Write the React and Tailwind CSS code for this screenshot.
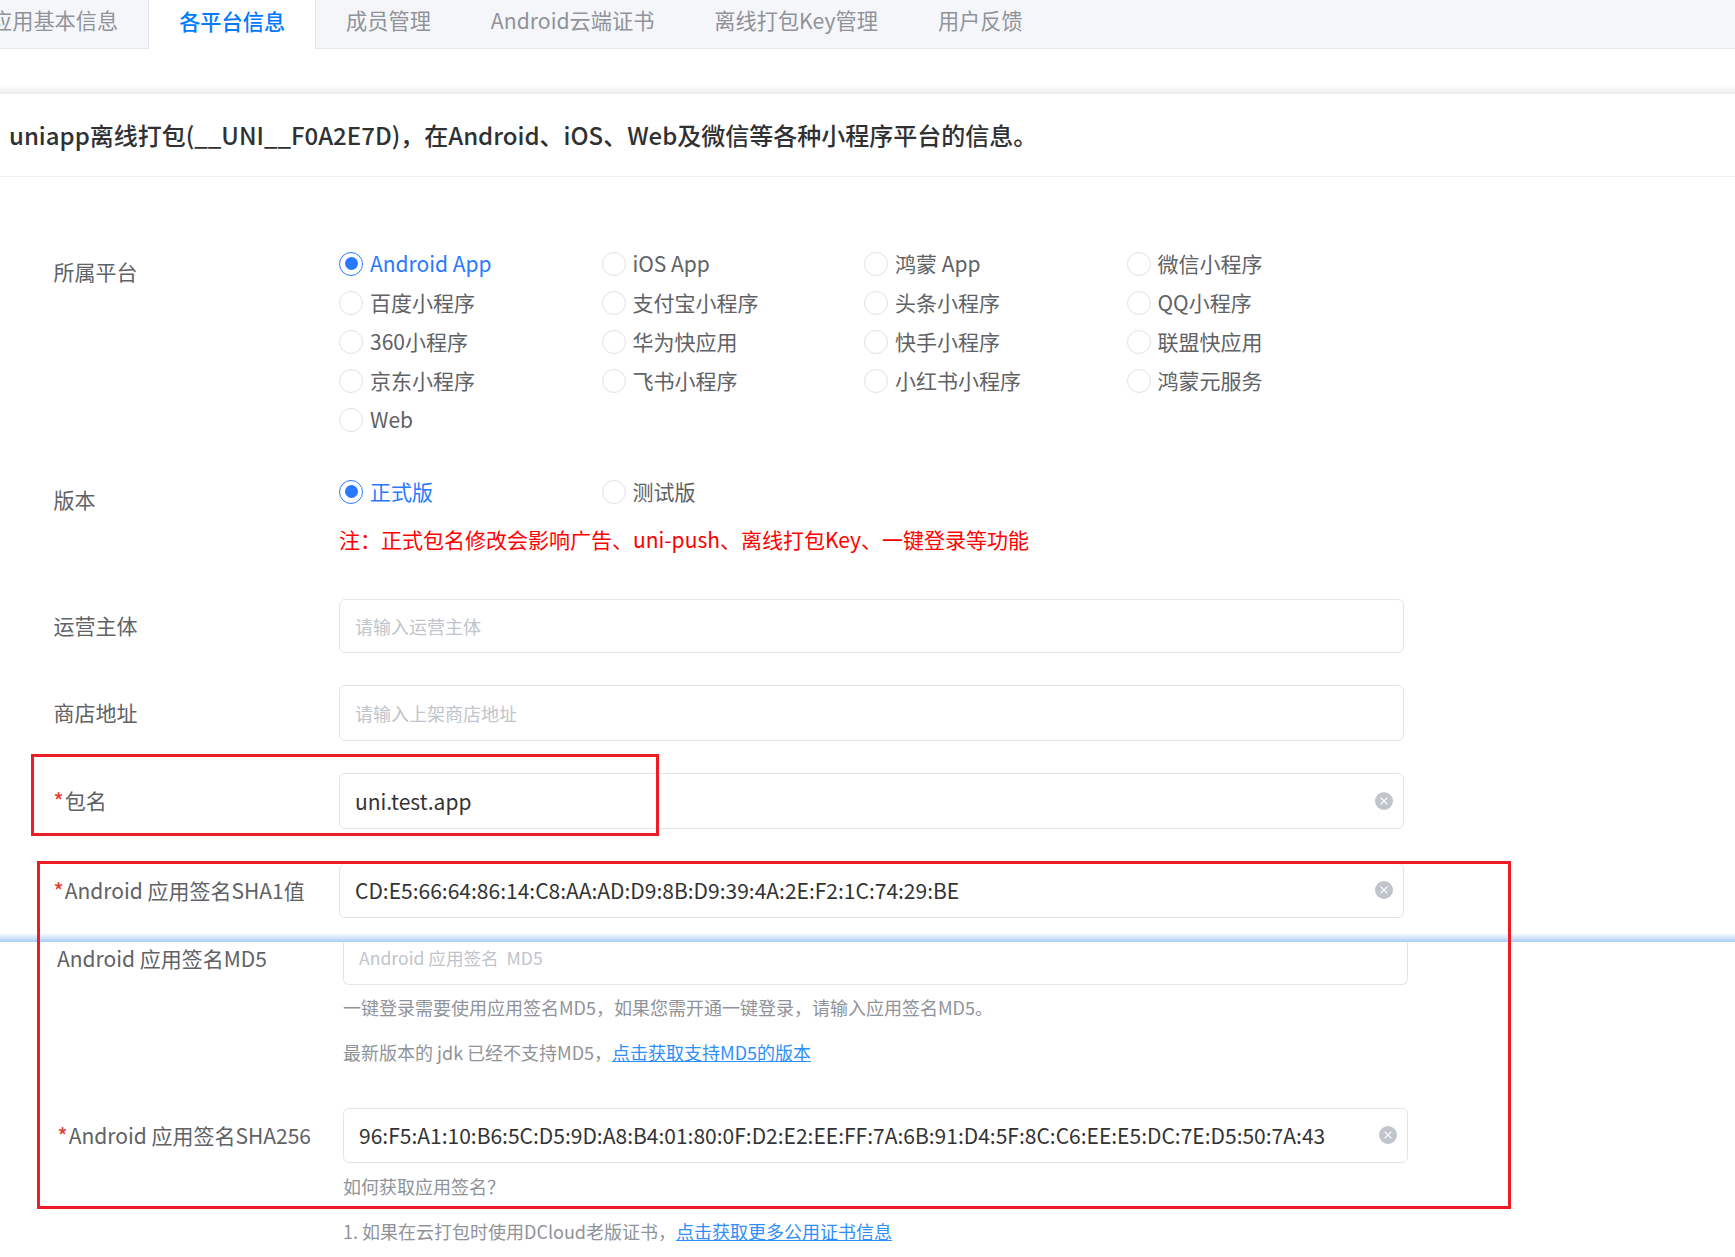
import React from 'react';

const font = { fontFamily: '"Noto Sans CJK SC", "Noto Sans", sans-serif' };

const tabs = ['应用基本信息', '各平台信息', '成员管理', 'Android云端证书', '离线打包Key管理', '用户反馈'];

const platforms = [
  'Android App', 'iOS App', '鸿蒙 App', '微信小程序',
  '百度小程序', '支付宝小程序', '头条小程序', 'QQ小程序',
  '360小程序', '华为快应用', '快手小程序', '联盟快应用',
  '京东小程序', '飞书小程序', '小红书小程序', '鸿蒙元服务',
  'Web',
];

function Radio({ label, checked }) {
  return (
    <div className="flex items-center h-[39px]">
      <span
        className={
          checked
            ? 'flex items-center justify-center w-[24px] h-[24px] rounded-full border border-[#2979ff]'
            : 'flex items-center justify-center w-[24px] h-[24px] rounded-full border border-[#dfe2ea]'
        }
      >
        {checked && <span className="w-[13px] h-[13px] rounded-full bg-[#2979ff]" />}
      </span>
      <span className={checked ? 'ml-[7px] text-[21px] text-[#2979ff]' : 'ml-[7px] text-[21px] text-[#606266]'}>{label}</span>
    </div>
  );
}

function ClearIcon() {
  return (
    <svg width="18" height="18" viewBox="0 0 18 18" className="shrink-0 mb-[1px]">
      <circle cx="9" cy="9" r="9" fill="#c0c4cc" />
      <path d="M5.6 5.6l6.8 6.8M12.4 5.6l-6.8 6.8" stroke="#fff" strokeWidth="1.3" />
    </svg>
  );
}

function Field({ label, required, value, placeholder, className }) {
  return (
    <div className={'flex items-center ' + className}>
      <div className="w-[286px] shrink-0 pl-[0.5px] text-[21px] text-[#606266] whitespace-nowrap">
        {required && <span className="mr-[1px] font-medium text-[#e43d33]">*</span>}
        {label}
      </div>
      <div className="flex items-center flex-1 h-full pl-[15px] pr-[10px] border border-[#e5e5e5] rounded-[6px]">
        {value ? (
          <span className="flex-1 pt-[1px] text-[21px] text-[#333]">{value}</span>
        ) : (
          <span className="flex-1 text-[18px] text-[#c0c4cc]">{placeholder}</span>
        )}
        {value && <ClearIcon />}
      </div>
    </div>
  );
}

export default function App() {
  return (
    <div className="relative w-[1735px] h-[1257px] overflow-hidden bg-white" style={font}>
      {/* tabs */}
      <div className="flex h-[49px] bg-[#f5f6fa] border-b border-[#e4e6ee]">
        <div className="-ml-[39px] flex">
          {tabs.map((t, i) => (
            <div
              key={t}
              className={
                i === 1
                  ? 'h-[49px] px-[30px] pb-[8px] flex items-center text-[21.2px] text-[#007aff] bg-white border-x border-[#e0e2ea] font-medium'
                  : 'h-[48px] px-[30px] pb-[8px] flex items-center text-[21.2px] text-[#909399]'
              }
            >
              {t}
            </div>
          ))}
        </div>
      </div>

      {/* title */}
      <div className="mt-[36px] h-[9px] bg-linear-to-b from-white to-[#ececec]" />
      <div className="h-[83px] flex items-center pl-[9px] border-b border-[#f0f0f0] text-[24px] font-medium text-[#303133]">
        uniapp离线打包(__UNI__F0A2E7D)，在Android、iOS、Web及微信等各种小程序平台的信息。
      </div>

      {/* first part of the form */}
      <div className="pl-[53px] w-[1404px]">
        <div className="flex mt-[67px]">
          <div className="w-[286px] shrink-0 pt-[12px] pl-[0.5px] text-[21px] text-[#606266]">所属平台</div>
          <div className="grid grid-cols-[262.5px_262.5px_262.5px_262.5px]">
            {platforms.map((p, i) => (
              <Radio key={p} label={p} checked={i === 0} />
            ))}
          </div>
        </div>

        <div className="flex mt-[33px]">
          <div className="w-[286px] shrink-0 pt-[12px] pl-[0.5px] text-[21px] text-[#606266]">版本</div>
          <div>
            <div className="grid grid-cols-[262.5px_262.5px]">
              <Radio label="正式版" checked />
              <Radio label="测试版" />
            </div>
            <div className="mt-[12px] text-[21px] leading-[32px] text-[#ff0000]">
              注：正式包名修改会影响广告、uni-push、离线打包Key、一键登录等功能
            </div>
          </div>
        </div>

        <Field label="运营主体" placeholder="请输入运营主体" className="mt-[44px] h-[54px]" />
        <Field label="商店地址" placeholder="请输入上架商店地址" className="mt-[32px] h-[56px]" />
        <Field required label="包名" value="uni.test.app" className="mt-[32px] h-[56px]" />
        <Field
          required
          label="Android 应用签名SHA1值"
          value="CD:E5:66:64:86:14:C8:AA:AD:D9:8B:D9:39:4A:2E:F2:1C:74:29:BE"
          className="mt-[34px] h-[55px]"
        />
      </div>

      {/* second screenshot glued below */}
      <div className="mt-[15px] h-[9px] bg-linear-to-b from-white to-[#a9cdf8]" />
      <div className="pl-[57px] w-[1408px]">
        <div className="flex h-[43px]">
          <div className="w-[286px] shrink-0 pt-[1px] text-[21px] text-[#606266]">Android 应用签名MD5</div>
          <div className="flex-1 flex items-start pt-[3px] pl-[15px] border-x border-b border-[#e5e5e5] rounded-b-[6px] text-[17.6px] text-[#c0c4cc]">
            Android 应用签名&nbsp;&nbsp;MD5
          </div>
        </div>
        <div className="pl-[286px]">
          <div className="mt-[8px] text-[18px] leading-[28px] text-[#909399]">一键登录需要使用应用签名MD5，如果您需开通一键登录，请输入应用签名MD5。</div>
          <div className="mt-[17px] text-[18px] leading-[28px] text-[#909399]">
            最新版本的 jdk 已经不支持MD5，<span className="text-[#2f8ffa] underline">点击获取支持MD5的版本</span>
          </div>
        </div>
        <Field
          required
          label="Android 应用签名SHA256"
          value="96:F5:A1:10:B6:5C:D5:9D:A8:B4:01:80:0F:D2:E2:EE:FF:7A:6B:91:D4:5F:8C:C6:EE:E5:DC:7E:D5:50:7A:43"
          className="mt-[42px] h-[55px]"
        />
        <div className="pl-[286px]">
          <div className="mt-[9px] text-[18px] leading-[28px] text-[#909399]">如何获取应用签名？</div>
          <div className="mt-[17px] text-[18px] leading-[28px] text-[#909399]">
            1. 如果在云打包时使用DCloud老版证书，<span className="text-[#2f8ffa] underline">点击获取更多公用证书信息</span>
          </div>
        </div>
      </div>

      {/* red boxes drawn over the screenshot */}
      <div className="absolute left-[31px] top-[754px] w-[628px] h-[82px] border-[3px] border-[#ee1c25]" />
      <div className="absolute left-[37px] top-[861px] w-[1474px] h-[348px] border-[3px] border-[#ee1c25]" />
    </div>
  );
}
